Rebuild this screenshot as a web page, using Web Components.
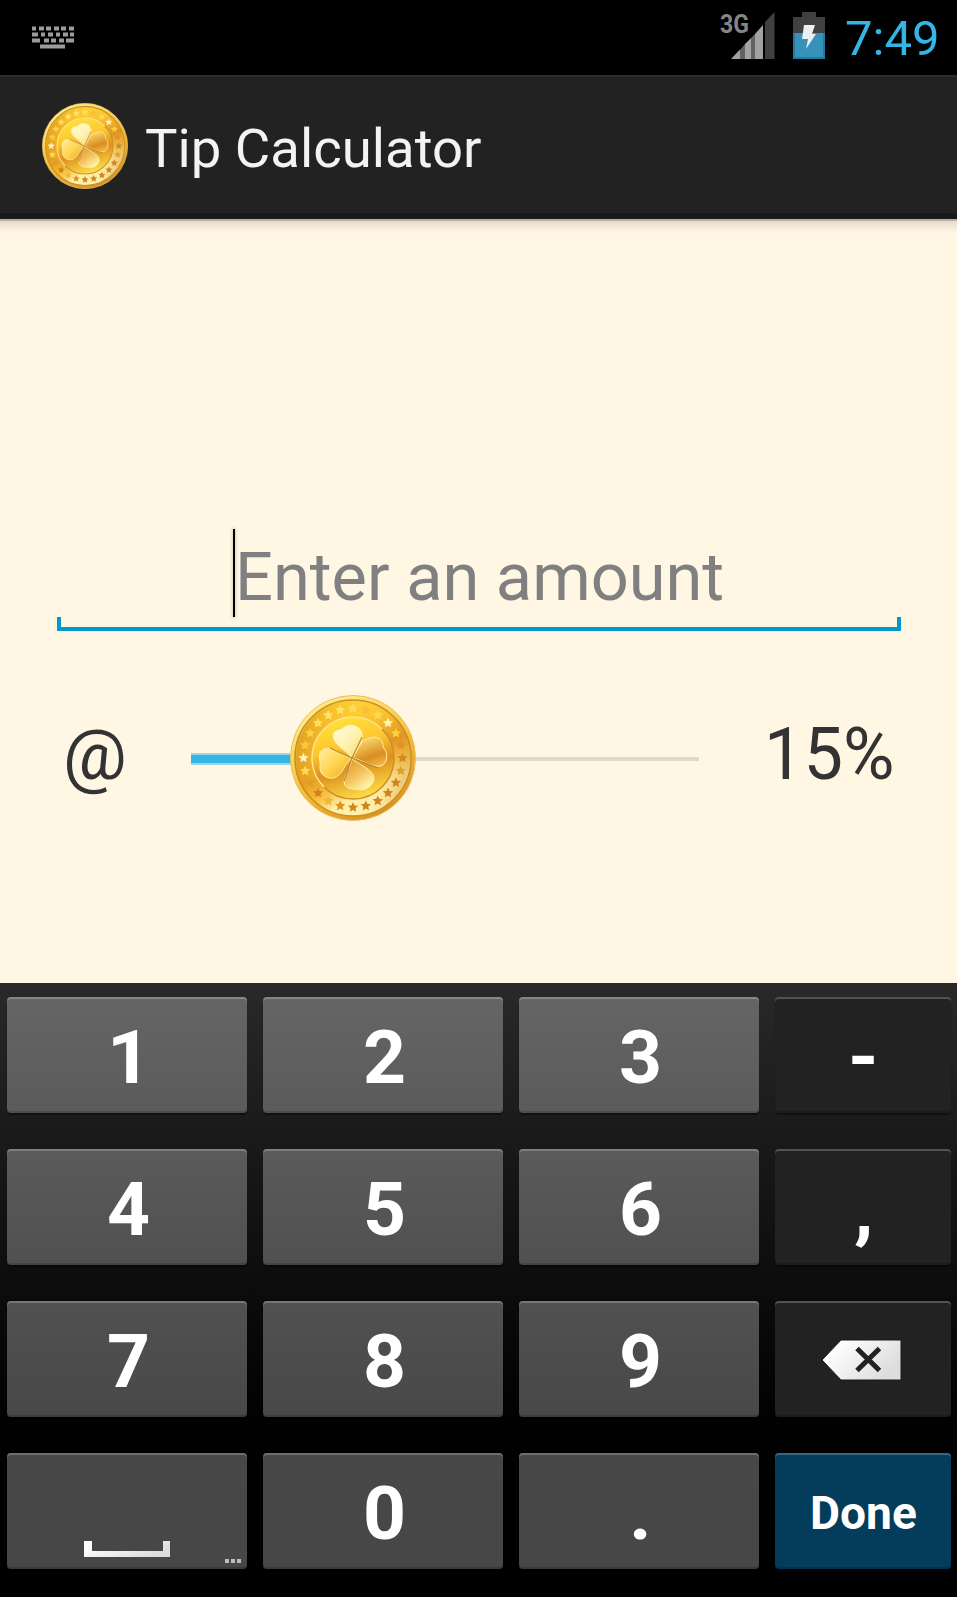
<!DOCTYPE html>
<html lang="en"><head><meta charset="utf-8"><title>Tip Calculator</title>
<style>html,body{margin:0;padding:0}body{width:957px;height:1597px;overflow:hidden;background:#fff6e4;font-family:Roboto,"Liberation Sans",sans-serif}</style></head>
<body><tip-app></tip-app>
<script>
const define = (name, html, setup) => customElements.define(name, class extends HTMLElement {
  connectedCallback() {
    if (this.shadowRoot) return;
    const t = document.createElement('template');
    t.innerHTML = typeof html === 'function' ? html(this) : html;
    this.attachShadow({mode: 'open'}).append(t.content.cloneNode(true));
    if (setup) setup(this, this.shadowRoot);
  }
});

/* One line of text stretched to an exact advance width. */
define('fit-text', '<style>:host{display:block;white-space:nowrap;line-height:1}span{display:inline-block;transform-origin:0 0}</style><span><slot></slot></span>', (el, root) => {
  const s = root.querySelector('span'), w = +el.getAttribute('width');
  el.style.width = w + 'px';
  s.style.transform = `scaleX(${w / s.offsetWidth})`;
});

/* Gold coin with a four-leaf clover and a ring of stars. */
const star = (cx, cy, r) => Array.from({length: 10}, (_, i) => {
  const a = -Math.PI / 2 + i * Math.PI / 5, q = i % 2 ? r * .48 : r;
  return (cx + q * Math.cos(a)).toFixed(2) + ',' + (cy + q * Math.sin(a)).toFixed(2);
}).join(' ');
const starFill = ['#ffdf5a','#f6c03a','#ffd75a','#fff3b8','#ffcf3c','#dc9526','#cf8a20','#dda032','#cf8420','#cf8420','#cf8420','#cf8420','#cf8420','#d99328','#efb638','#cc8420','#dba02c','#ffd860','#fff2c0','#f9c93e','#ffd044','#ffdf5a','#ffe566','#ffe266'];
const stars = () => Array.from({length: 24}, (_, i) => {
  const a = -Math.PI / 2 + i * Math.PI * 2 / 24;
  return `<polygon points="${star(63 + 49.5 * Math.cos(a), 63 + 49.5 * Math.sin(a), 5.4)}" fill="${starFill[i]}"/>`;
}).join('');
define('gold-coin', () => `<style>:host{display:block}svg{display:block;width:100%;height:100%}</style>
<svg viewBox="0 0 126 126"><defs>
<linearGradient id="rim" x1=".2" y1="0" x2=".75" y2="1"><stop offset="0" stop-color="#fff09a"/><stop offset=".3" stop-color="#ffd95a"/><stop offset=".6" stop-color="#f5b833"/><stop offset="1" stop-color="#d78d20"/></linearGradient>
<linearGradient id="band" x1=".25" y1="0" x2=".75" y2="1"><stop offset="0" stop-color="#ffdc3c"/><stop offset=".3" stop-color="#fbc431"/><stop offset=".52" stop-color="#e09524"/><stop offset=".66" stop-color="#f7c446"/><stop offset=".78" stop-color="#fff0a8"/><stop offset="1" stop-color="#fff3b4"/></linearGradient>
<linearGradient id="left" x1="0" y1=".3" x2="1" y2=".6"><stop offset="0" stop-color="#c97f18" stop-opacity=".6"/><stop offset=".22" stop-color="#f2ae20" stop-opacity=".55"/><stop offset=".5" stop-color="#ffc52c" stop-opacity="0"/><stop offset=".8" stop-color="#e39a22" stop-opacity=".05"/><stop offset="1" stop-color="#cc7e1a" stop-opacity=".4"/></linearGradient>
<linearGradient id="disc" x1=".3" y1="0" x2=".6" y2="1"><stop offset="0" stop-color="#ffe23c"/><stop offset=".35" stop-color="#fdc630"/><stop offset=".62" stop-color="#dd9021"/><stop offset="1" stop-color="#ffe047"/></linearGradient>
<linearGradient id="l1" x1="0" y1="0" x2="1" y2="1"><stop offset="0" stop-color="#fffbd8"/><stop offset=".5" stop-color="#fff3b4"/><stop offset="1" stop-color="#f9d869"/></linearGradient>
<linearGradient id="l2" x1=".2" y1="0" x2=".6" y2="1"><stop offset="0" stop-color="#ffe373"/><stop offset=".7" stop-color="#d98c22"/><stop offset="1" stop-color="#efb443"/></linearGradient>
<linearGradient id="l3" x1="0" y1="0" x2="1" y2="1"><stop offset="0" stop-color="#fff0a0"/><stop offset=".55" stop-color="#ffd14a"/><stop offset="1" stop-color="#e5a12e"/></linearGradient>
<linearGradient id="l4" x1="0" y1="0" x2=".7" y2="1"><stop offset="0" stop-color="#d98f25"/><stop offset=".55" stop-color="#f3c35c"/><stop offset="1" stop-color="#fff6b0"/></linearGradient></defs>
<circle cx="63" cy="63" r="62.5" fill="url(#rim)" stroke="#e8bf62" stroke-width="1"/>
<circle cx="63" cy="63" r="58" fill="url(#band)" stroke="#c9902a" stroke-width="1.7"/>
<circle cx="63" cy="63" r="57" fill="url(#left)"/>
${stars()}
<circle cx="63" cy="63" r="41" fill="url(#disc)"/>
<path d="M92 34A41 41 0 1 0 34 92" fill="none" stroke="#ffe48a" stroke-width="1.5"/>
<path d="M92 34A41 41 0 0 1 34 92" fill="none" stroke="#c9902a" stroke-width="1.5"/>
<g stroke="#fff0a0" stroke-width="1">
<path d="M62 63C56 55 42 49 43 40C44 34 50 36 53 33C58 28 69 30 71 36C76 47 65 55 62 63Z" fill="url(#l1)"/>
<path d="M63 63C68 56 69 45 80 43C87 40 94 45 93 52C98 57 98 66 93 70C85 75 73 65 63 63Z" fill="url(#l2)"/>
<path d="M61 64C54 61 43 51 34 54C26 58 31 65 30 71C29 79 36 84 43 83C53 81 54 69 61 64Z" fill="url(#l3)"/>
<path d="M62 64C61 73 51 83 55 90C59 96 66 93 70 95C77 95 84 90 84 83C83 74 69 70 62 64Z" fill="url(#l4)"/></g>
<path d="M62 63L72 42M62 63L88 73M62 63L40 53M62 63L54 86" stroke="#b98430" stroke-width="1.1"/>
</svg>`);

define('status-bar', `<style>
:host{display:flex;box-sizing:border-box;height:75px;background:#000;padding:0 17px 0 31px;align-items:flex-start}
svg{display:block;flex:none}.kb{margin-top:25px}.sig{margin-top:10px;margin-left:auto}.bat{margin:11px 0 0 17px}
fit-text{margin:15px 0 0 20px;color:#33b5e5;font-size:48px}
</style>
<svg class="kb" width="44" height="24" viewBox="0 0 44 24"><g stroke="#9c9c9c" stroke-width="4" fill="none">
<path d="M1 3.500H43" stroke-dasharray="4 3 5 2 5 3 5 2 5 3 7 9"/>
<path d="M1 9.500H43" stroke-dasharray="6 3 4 3 5 3 4 3 5 2 5 9"/>
<path d="M1 15.500H43" stroke-dasharray="8 4 5 2 5 3 5 2 10 9"/><path d="M9 21.500H34"/></g></svg>
<svg class="sig" width="56" height="50" viewBox="0 0 56 50"><text x="0" y="23" font-family="Roboto" font-weight="700" font-size="26" fill="#858585" textLength="29" lengthAdjust="spacingAndGlyphs">3G</text>
<path d="M45 12L54.500 2V49H45Z" fill="#404040"/><path d="M11 49L20 39.500V49ZM25 34L31 28V49H25ZM35 24L43 15V49H35Z" fill="#a2a2a2"/><path d="M20 40L25 34V49H20ZM31 28L35 24V49H31Z" fill="#626262"/></svg>
<svg class="bat" width="32" height="48" viewBox="0 0 32 48"><path d="M0 6H9V1H23V6H32V23H0Z" fill="#404040"/><path d="M0 22H32V48H0Z" fill="#3792b9"/><path d="M1 22V47H31V22" fill="none" stroke="#237aa0" stroke-width="2"/><path d="M11 14H22L19 23H23L13 38L15 28H9Z" fill="#e9eef0"/></svg>
<fit-text width="95">7:49</fit-text>`);

define('action-bar', `<style>
:host{display:flex;box-sizing:border-box;height:144px;background:#222;border-top:2px solid #2e2e2e;border-bottom:6px solid #1a1a1a;padding:26px 0 0 42px}
gold-coin{width:86px;height:86px;flex:none}fit-text{margin:19px 0 0 17px;color:#f3f3f3;font-size:54px}
</style><gold-coin></gold-coin><fit-text width="337"><slot></slot></fit-text>`);

define('amount-field', `<style>
:host{display:block;box-sizing:border-box;width:844px;height:102px;margin:0 56px 0 57px}
.row{display:flex;padding:0 0 0 176px}
.cur{width:2px;height:88px;background:#000;box-shadow:0 0 3px 1px rgba(90,70,30,.2)}
fit-text{margin:15px 0 0 0;color:#808080;font-size:67px}
.line{box-sizing:border-box;height:14px;border:4px solid #0099cc;border-top:0}
</style><div class="row"><div class="cur"></div><fit-text width="489"><slot></slot></fit-text></div><div class="line"></div>`);

define('tip-slider', `<style>
:host{display:flex;height:126px;padding-left:63px;color:#333;align-items:flex-start}
.at{font-size:70px;margin-top:25px}.pct{font-size:73px;margin:23px 0 0 65px}
.track{width:508px;height:128px;margin-left:64px;display:flex;align-items:center;position:relative}
.on{box-sizing:border-box;width:120px;height:12px;background:#33b5e5;border:solid #99d6e6;border-width:2px 0}.off{flex:1;height:4px;background:#e0d7c9}
gold-coin{position:absolute;left:98px;top:0;width:128px;height:126px}
</style><fit-text class="at" width="64">@</fit-text><div class="track"><div class="on"></div><div class="off"></div><gold-coin></gold-coin></div><fit-text class="pct" width="131">15%</fit-text>`);

define('pad-key', el => `<style>
:host{display:flex;box-sizing:border-box;height:116px;border-radius:4px;position:relative;justify-content:center;align-items:flex-start;color:#fff;font-weight:700;
background:linear-gradient(var(--a),var(--b));box-shadow:inset 0 2px rgba(255,255,255,.22),inset 0 -2px rgba(0,0,0,.16),0 2px 1px rgba(0,0,0,.4)}
fit-text{font-size:75px;margin:23px 0 0 var(--dx,2px)}
:host([kind=done]) fit-text{font-size:47px;margin:36px 0 0}
</style>${el.hasAttribute('w') ? `<fit-text width="${el.getAttribute('w')}"><slot></slot></fit-text>` : '<slot></slot>'}`);

define('num-pad', () => {
  const c = [['#656565','#5b5b5b'],['#5b5b5b','#505050'],['#515151','#484848'],['#474747','#474747']];
  const k = (r, s, w = 43, dx = 3) => `<pad-key w="${w}" style="--a:${c[r][0]};--b:${c[r][1]};--dx:${dx}px">${s}</pad-key>`;
  const d = (s, w, dx) => `<pad-key w="${w}" class="dark" style="--dx:${dx}px">${s}</pad-key>`;
  return `<style>
:host{display:grid;box-sizing:border-box;height:614px;grid-template-columns:240px 240px 240px 176px;column-gap:16px;grid-auto-rows:116px;row-gap:36px;padding:14px 6px 28px 7px;background:linear-gradient(#292929,#1c1c1c 130px,#0e0e0e 282px,#020202 430px,#000)}
.dark{--a:#222;--b:#222}svg{display:block}.bs{margin:37px 0 0 -2px}
.sp{margin-top:88px;margin-left:-1px}.dots{position:absolute;right:6px;bottom:6px}
</style>${k(0,1,44,4)}${k(0,2)}${k(0,3)}${d('-',31,1)}
${k(1,4)}${k(1,5)}${k(1,6)}${d(',',19,0)}
${k(2,7)}${k(2,8)}${k(2,9)}<pad-key class="dark"><svg class="bs" width="84" height="44" viewBox="0 0 84 44"><defs><linearGradient id="g" x2="1" y2=".5"><stop offset=".2" stop-color="#fff"/><stop offset="1" stop-color="#ddd"/></linearGradient></defs><path d="M2 22L21 2H81V42H21Z" fill="url(#g)" stroke="#191919"/><path d="M37 10.500L59.500 32.500M59.500 10.500L37 32.500" stroke="#222" stroke-width="5"/></svg></pad-key>
<pad-key style="--a:#474747;--b:#474747"><svg class="sp" width="86" height="16" viewBox="0 0 86 16"><defs><linearGradient id="g" x2="1"><stop offset=".3" stop-color="#fff"/><stop offset=".65" stop-color="#ddd"/><stop offset="1" stop-color="#e6e6e6"/></linearGradient></defs><path d="M0 0H8V10H79V0H86V16H0Z" fill="url(#g)"/></svg><svg class="dots" width="16" height="4"><path d="M0 0H4V4H0ZM6 0H10V4H6ZM12 0H16V4H12Z" fill="#bcbcbc"/></svg></pad-key>${k(3,0)}${k(3,'.',23,2)}
<pad-key kind="done" w="107" style="--a:#043c5b;--b:#043c5b">Done</pad-key>`;
});

define('tip-app', `<style>
:host{display:flex;flex-direction:column;width:957px;height:1597px;background:#fff6e4}
main{height:764px;box-sizing:border-box;padding-top:310px;background:linear-gradient(#b8aea2 0 2px,#e6dac8 2px,#f3e9d8 7px,#fff6e4 14px)}
tip-slider{margin-top:64px}
</style><status-bar></status-bar><action-bar>Tip Calculator</action-bar>
<main><amount-field>Enter an amount</amount-field><tip-slider></tip-slider></main><num-pad></num-pad>`);
</script></body></html>
